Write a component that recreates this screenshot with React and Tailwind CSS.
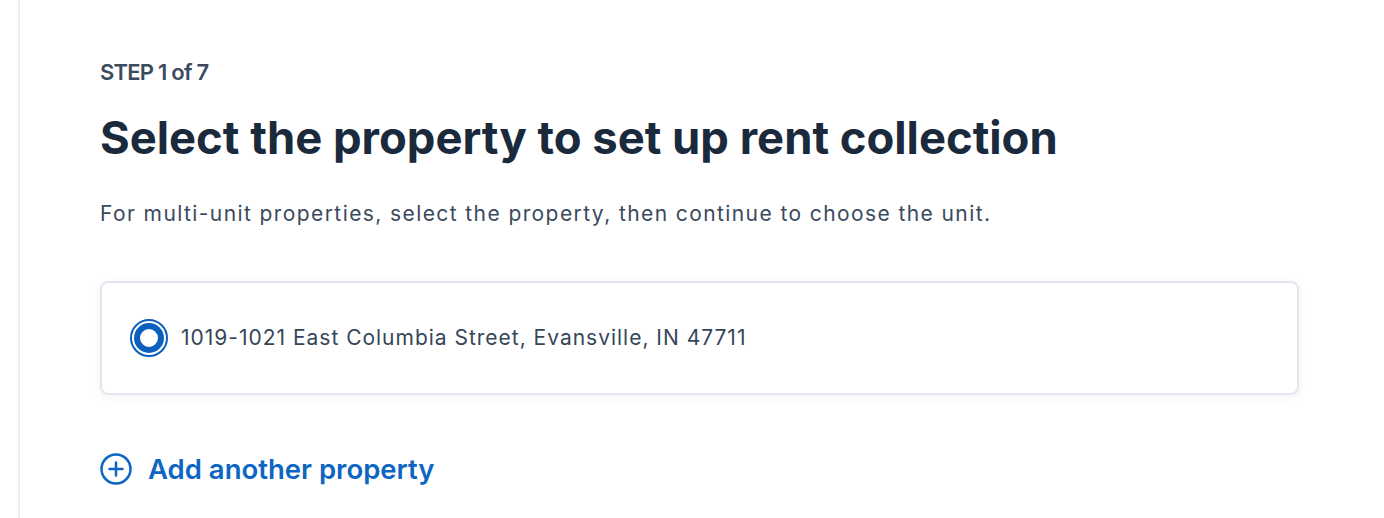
export default function App() {
  return (
    <div className="min-h-[518px] bg-white font-['Inter',sans-serif] flex">
      <div className="w-[20px] shrink-0 bg-white border-r-2 border-[#ededf3]" />
      <main className="flex-1 pl-[80px] pr-[84px] pt-[60px]">
        <p className="text-[22px] leading-[24px] font-semibold tracking-[-0.035em] text-[#3b4b5e]">STEP 1 of 7</p>
        <h1 className="mt-[28px] text-[45.4px] leading-[52px] font-bold text-[#1a2a3c]">
          Select the property to set up rent collection
        </h1>
        <p className="mt-[36px] text-[21px] leading-[28px] tracking-[0.067em] text-[#3a4a5d]">
          For multi-unit properties, select the property, then continue to choose the unit.
        </p>
        <div className="mt-[53px] w-[1199px] h-[114px] rounded-[8px] border-2 border-[#e4e6ef] shadow-[0_2px_8px_rgba(30,40,80,0.06)] flex items-center pl-[28px]">
          <span className="w-[38px] h-[38px] rounded-full border-[2.5px] border-[#0b5fbd] p-[2px] flex">
            <span className="flex-1 rounded-full border-[6px] border-[#0b5fbd] bg-white" />
          </span>
          <span className="ml-[13px] text-[21px] leading-[28px] tracking-[0.047em] text-[#364659]">
            1019-1021 East Columbia Street, Evansville, IN 47711
          </span>
        </div>
        <button className="mt-[57px] flex items-center text-[#0d66c2]">
          <svg width="32" height="32" viewBox="0 0 32 32" fill="none" stroke="currentColor" strokeWidth="2.5" strokeLinecap="round">
            <circle cx="16" cy="16" r="14.5" />
            <path d="M16 9.5v13M9.5 16h13" />
          </svg>
          <span className="ml-[16px] text-[27.5px] leading-[34px] font-semibold">Add another property</span>
        </button>
      </main>
    </div>
  );
}
